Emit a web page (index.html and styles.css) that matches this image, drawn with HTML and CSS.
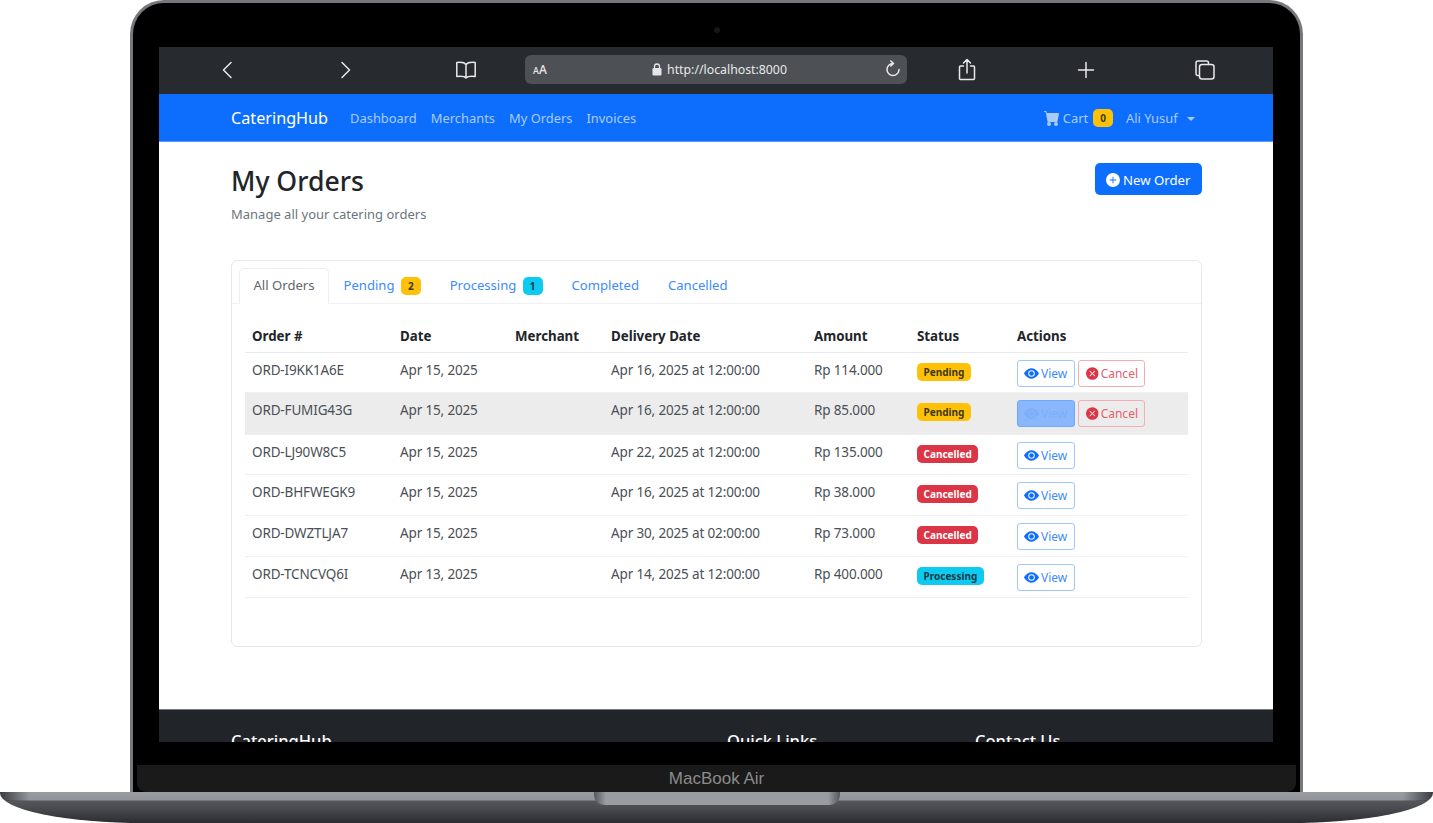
FILE: index.html
```html
<!DOCTYPE html>
<html lang="en">
<head>
  <meta charset="UTF-8" />
  <title>My Orders</title>
  <link rel="stylesheet" href="styles.css">
</head>
<body>
  <svg class="icon-defs" width="0" height="0" aria-hidden="true">
    <symbol id="i-eye" viewBox="0 0 16 16"><path d="M10.5 8a2.5 2.5 0 1 1-5 0 2.5 2.5 0 0 1 5 0"/><path d="M0 8s3-5.5 8-5.5S16 8 16 8s-3 5.5-8 5.5S0 8 0 8m8 3.5a3.5 3.5 0 1 0 0-7 3.5 3.5 0 0 0 0 7"/></symbol>
    <symbol id="i-x" viewBox="0 0 16 16"><path d="M16 8A8 8 0 1 1 0 8a8 8 0 0 1 16 0M5.354 4.646a.5.5 0 1 0-.708.708L7.293 8l-2.647 2.646a.5.5 0 0 0 .708.708L8 8.707l2.646 2.647a.5.5 0 0 0 .708-.708L8.707 8l2.647-2.646a.5.5 0 0 0-.708-.708L8 7.293z"/></symbol>
  </svg>

  <div class="laptop">
    <div class="lid">
      <span class="camera"></span>
      <div class="screen">

        <!-- Safari toolbar -->
        <div class="browser-bar">
          <svg class="tool tool-back" width="12" height="18" viewBox="0 0 12 18"><path d="M10 1.5 2.5 9l7.5 7.5"/></svg>
          <svg class="tool tool-forward" width="12" height="18" viewBox="0 0 12 18"><path d="M2 1.5 9.500 9 2 16.500"/></svg>
          <svg class="tool tool-book" width="22" height="20" viewBox="0 0 22 20"><path d="M11 4.500C9.500 2.500 6 2 1.800 2.500V16.500C6 16 9.500 16.300 11 18 12.500 16.300 16 16 20.200 16.500V2.500C16 2 12.500 2.500 11 4.500ZM11 4.500V18"/></svg>
          <div class="address">
            <span class="aa"><small>A</small>A</span>
            <span class="url">
              <svg width="10" height="13" viewBox="0 0 10 13"><rect x="0.500" y="5" width="9" height="7.500" rx="1.300" fill="#e4e5e6"/><path d="M2.500 5.500V3.500a2.500 2.500 0 0 1 5 0v2" fill="none" stroke="#e4e5e6" stroke-width="1.300"/></svg>
              http://localhost:8000
            </span>
            <svg class="tool" width="16" height="19" viewBox="0 0 16 19"><path d="M8 3.500a6 6 0 1 0 6 6M5.800 1 8.500 3.500 5.800 6"/></svg>
          </div>
          <svg class="tool tool-share" width="18" height="23" viewBox="0 0 18 23"><path d="M5.500 8H2.500a1 1 0 0 0-1 1v11.500a1 1 0 0 0 1 1h13a1 1 0 0 0 1-1V9a1 1 0 0 0-1-1h-3M9 15V1.500M5.500 5 9 1.500 12.500 5"/></svg>
          <svg class="tool tool-plus" width="18" height="18" viewBox="0 0 18 18"><path d="M9 1.500v15M1.500 9h15"/></svg>
          <svg class="tool tool-tabs" width="20" height="20" viewBox="0 0 20 20"><path d="M3.500 15.500H2.800A1.800 1.800 0 0 1 1 13.700V3a2 2 0 0 1 2-2h8.500a2 2 0 0 1 2 2v1"/><rect x="4.500" y="4.500" width="14.500" height="14.500" rx="2.500"/></svg>
        </div>

        <nav class="navbar">
          <a class="brand">CateringHub</a>
          <a class="nav-link">Dashboard</a>
          <a class="nav-link">Merchants</a>
          <a class="nav-link">My Orders</a>
          <a class="nav-link">Invoices</a>
          <div class="nav-right">
            <a class="nav-link cart">
              <svg width="16" height="16" viewBox="0 0 16 16" fill="currentColor"><path d="M0 1.500A.5.5 0 0 1 .5 1H2a.5.5 0 0 1 .485.379L2.890 3H14.500a.5.5 0 0 1 .491.592l-1.500 8A.5.5 0 0 1 13 12H4a.5.5 0 0 1-.491-.408L2.010 3.607 1.610 2H.5a.5.5 0 0 1-.5-.5M5 12a2 2 0 1 0 0 4 2 2 0 0 0 0-4m7 0a2 2 0 1 0 0 4 2 2 0 0 0 0-4"/></svg>
              Cart <span class="badge badge-warning cart-count">0</span>
            </a>
            <a class="nav-link user">Ali Yusuf <span class="caret"></span></a>
          </div>
        </nav>

        <main class="content">
          <div class="page-head">
            <div>
              <h1>My Orders</h1>
              <p class="subtitle">Manage all your catering orders</p>
            </div>
            <a class="btn-new">
              <svg width="14" height="14" viewBox="0 0 16 16" fill="currentColor"><path d="M16 8A8 8 0 1 1 0 8a8 8 0 0 1 16 0M8.500 4.500a.5.5 0 0 0-1 0v3h-3a.5.5 0 0 0 0 1h3v3a.5.5 0 0 0 1 0v-3h3a.5.5 0 0 0 0-1h-3z"/></svg>
              New Order
            </a>
          </div>

          <section class="card">
            <ul class="tabs">
              <li class="tab active">All Orders</li>
              <li class="tab">Pending <span class="badge badge-warning tab-count">2</span></li>
              <li class="tab">Processing <span class="badge badge-info tab-count">1</span></li>
              <li class="tab">Completed</li>
              <li class="tab">Cancelled</li>
            </ul>

            <table class="orders">
              <colgroup>
                <col class="c-order"><col class="c-date"><col class="c-merchant"><col class="c-delivery"><col class="c-amount"><col class="c-status"><col>
              </colgroup>
              <thead>
                <tr><th>Order #</th><th>Date</th><th>Merchant</th><th>Delivery Date</th><th>Amount</th><th>Status</th><th>Actions</th></tr>
              </thead>
              <tbody>
                <tr class="row-short">
                  <td>ORD-I9KK1A6E</td><td>Apr 15, 2025</td><td></td><td>Apr 16, 2025 at 12:00:00</td><td>Rp 114.000</td>
                  <td><span class="badge badge-warning">Pending</span></td>
                  <td><a class="btn btn-view"><svg><use href="#i-eye"/></svg>View</a><a class="btn btn-cancel"><svg><use href="#i-x"/></svg>Cancel</a></td>
                </tr>
                <tr class="hovered">
                  <td>ORD-FUMIG43G</td><td>Apr 15, 2025</td><td></td><td>Apr 16, 2025 at 12:00:00</td><td>Rp 85.000</td>
                  <td><span class="badge badge-warning">Pending</span></td>
                  <td><a class="btn btn-view is-hover"><svg><use href="#i-eye"/></svg>View</a><a class="btn btn-cancel"><svg><use href="#i-x"/></svg>Cancel</a></td>
                </tr>
                <tr class="row-short">
                  <td>ORD-LJ90W8C5</td><td>Apr 15, 2025</td><td></td><td>Apr 22, 2025 at 12:00:00</td><td>Rp 135.000</td>
                  <td><span class="badge badge-danger">Cancelled</span></td>
                  <td><a class="btn btn-view"><svg><use href="#i-eye"/></svg>View</a></td>
                </tr>
                <tr>
                  <td>ORD-BHFWEGK9</td><td>Apr 15, 2025</td><td></td><td>Apr 16, 2025 at 12:00:00</td><td>Rp 38.000</td>
                  <td><span class="badge badge-danger">Cancelled</span></td>
                  <td><a class="btn btn-view"><svg><use href="#i-eye"/></svg>View</a></td>
                </tr>
                <tr>
                  <td>ORD-DWZTLJA7</td><td>Apr 15, 2025</td><td></td><td>Apr 30, 2025 at 02:00:00</td><td>Rp 73.000</td>
                  <td><span class="badge badge-danger">Cancelled</span></td>
                  <td><a class="btn btn-view"><svg><use href="#i-eye"/></svg>View</a></td>
                </tr>
                <tr>
                  <td>ORD-TCNCVQ6I</td><td>Apr 13, 2025</td><td></td><td>Apr 14, 2025 at 12:00:00</td><td>Rp 400.000</td>
                  <td><span class="badge badge-info">Processing</span></td>
                  <td><a class="btn btn-view"><svg><use href="#i-eye"/></svg>View</a></td>
                </tr>
              </tbody>
            </table>
          </section>
        </main>

        <footer class="footer">
          <h5 class="f-brand">CateringHub</h5>
          <h5 class="f-links">Quick Links</h5>
          <h5 class="f-contact">Contact Us</h5>
        </footer>
      </div>
      <div class="bezel"></div>
      <div class="chin">MacBook Air</div>
    </div>
    <div class="base"><span class="notch"></span></div>
  </div>
</body>
</html>
```

FILE: styles.css
```css
* {
  box-sizing: border-box;
}
html, body {
  margin: 0;
  height: 823px;
  overflow: hidden;
  background: #fff;
}
body {
  font-family: "Noto Sans", "Open Sans", sans-serif;
  font-size: 14px;
  color: #212529;
}
.icon-defs {
  display: block;
  height: 0;
}

/* laptop frame */
.laptop {
  display: flex;
  flex-direction: column;
  align-items: center;
  width: 1433px;
}
.lid {
  position: relative;
  width: 1173px;
  height: 792px;
  padding-top: 44px;
  background: #000;
  border: 3px solid #77787c;
  border-bottom: 0;
  border-radius: 34px 34px 0 0;
}
.camera {
  position: absolute;
  top: 24px;
  left: 581px;
  width: 6px;
  height: 6px;
  border-radius: 50%;
  background: #14161a;
}
.screen {
  height: 695px;
  margin: 0 27px 0 26px;
  overflow: hidden;
  background: #fff;
}
.bezel {
  height: 23px;
}
.chin {
  height: 27px;
  margin: 0 4px;
  background: #1a1a1a;
  border-radius: 0 0 9px 9px;
  color: #8b8b8d;
  font-family: "Liberation Sans", sans-serif;
  font-size: 17px;
  line-height: 28px;
  text-align: center;
}
.base {
  position: relative;
  width: 1433px;
  height: 31px;
  background:
    linear-gradient(90deg, #3a3b40 0, rgba(58,59,64,0) 30px, rgba(58,59,64,0) 1403px, #3a3b40 1433px) 0 0 / 100% 9px no-repeat,
    linear-gradient(#9a9ba1 0, #94959b 8px, #55565c 9px, #4b4c52 16px, #2b2c31 31px);
  border-radius: 0 0 145px 145px / 0 0 30px 30px;
}
.notch {
  position: absolute;
  top: 0;
  left: 594px;
  width: 246px;
  height: 13px;
  background: linear-gradient(90deg, #56575c 0, #9b9ca2 12px, #9b9ca2 234px, #56575c 246px);
  border-radius: 0 0 10px 10px;
}

/* safari toolbar */
.browser-bar {
  display: flex;
  align-items: center;
  height: 47px;
  padding-bottom: 2px;
  background: #272b2f;
}
.tool {
  flex: none;
  fill: none;
  stroke: #e8e9ea;
  stroke-width: 1.5;
  stroke-linecap: round;
  stroke-linejoin: round;
}
.tool-back { margin-left: 62px; }
.tool-forward { margin-left: 107px; }
.tool-book { margin-left: 103px; }
.tool-share { margin-left: 51px; }
.tool-plus { margin-left: 101px; }
.tool-tabs { margin-left: 100px; }
.address {
  display: flex;
  align-items: center;
  justify-content: space-between;
  width: 382px;
  height: 29px;
  margin-left: 48px;
  padding: 0 6px 0 8px;
  background: #4d5054;
  border-radius: 6px;
  color: #e8e9ea;
}
.aa {
  width: 21px;
  font-size: 12px;
  font-weight: 500;
}
.aa small {
  font-size: 9px;
}
.url {
  display: flex;
  align-items: center;
  gap: 5px;
  font-size: 12.300px;
}

/* navbar */
.navbar {
  display: flex;
  align-items: center;
  height: 48px;
  padding: 0 72px;
  background: #0d6efd;
  border-bottom: 1px solid #5a9cfd;
  color: #fff;
}
.brand {
  margin-right: 22px;
  font-size: 16.200px;
}
.nav-link {
  margin-right: 14px;
  color: #a9cbfe;
  font-size: 12.900px;
}
.nav-right {
  display: flex;
  align-items: center;
  margin-left: auto;
}
.cart {
  display: flex;
  align-items: center;
  gap: 3px;
  margin-right: 13px;
}
.cart-count {
  margin-left: 2px;
  padding: 4px 7px;
  font-size: 10px;
}
.user {
  margin-right: 6px;
}
.caret {
  display: inline-block;
  margin-left: 6px;
  vertical-align: 2px;
  border-top: 4px solid;
  border-left: 4px solid transparent;
  border-right: 4px solid transparent;
}

/* page */
.content {
  height: 567px;
  padding: 21px 71px 0 72px;
}
.page-head {
  display: flex;
  justify-content: space-between;
  align-items: flex-start;
  height: 97px;
}
h1 {
  margin: 0;
  font-size: 26.600px;
  font-weight: 500;
  line-height: 36px;
}
.subtitle {
  margin: 5px 0 0;
  color: #6c757d;
  font-size: 13px;
  line-height: 20px;
}
.btn-new {
  display: flex;
  align-items: center;
  gap: 3px;
  width: 107px;
  height: 32px;
  padding: 1px 0 0 11px;
  background: #0d6efd;
  border-radius: 5px;
  color: #fff;
  font-size: 13.200px;
}

.card {
  height: 387px;
  padding: 7px 13px 0 7px;
  border: 1px solid #e6e8ea;
  border-radius: 6px;
}
.tabs {
  display: flex;
  height: 36px;
  margin: 0 -13px 0 -7px;
  padding: 0 0 0 7px;
  list-style: none;
  border-bottom: 1px solid #eff0f1;
}
.tab {
  height: 36px;
  padding: 0 14.500px;
  color: #3d8bfd;
  font-size: 13.100px;
  line-height: 35px;
}
.tab.active {
  color: #5f666c;
  background: #fff;
  border: 1px solid #eceef0;
  border-bottom-color: #fff;
  border-radius: 5px 5px 0 0;
  padding: 0 13.500px;
  line-height: 33px;
}
.tab-count {
  margin-left: 3px;
  padding: 4px 7px;
  font-size: 10px;
  color: #212529;
}

.orders {
  width: 943px;
  margin: 16px 0 0 6px;
  border-collapse: collapse;
  table-layout: fixed;
}
.c-order { width: 148px; }
.c-date { width: 115px; }
.c-merchant { width: 96px; }
.c-delivery { width: 203px; }
.c-amount { width: 103px; }
.c-status { width: 100px; }
.orders th {
  height: 32px;
  padding: 0 7px;
  font-size: 13.300px;
  font-weight: 700;
  text-align: left;
  border-bottom: 1px solid #e9eaeb;
}
.orders td {
  height: 41px;
  padding: 7px 7px 0;
  color: #4a5056;
  font-size: 13.500px;
  letter-spacing: -0.15px;
  line-height: 21px;
  vertical-align: top;
  white-space: nowrap;
  border-bottom: 1px solid #eff0f1;
}
.orders .row-short td {
  height: 40px;
}
.orders .hovered td {
  height: 42px;
  background: #ececec;
}

.badge {
  display: inline-block;
  border-radius: 5px;
  font-size: 10px;
  font-weight: 700;
  line-height: 1;
  white-space: nowrap;
}
.orders .badge {
  padding: 4px 6.500px;
  margin-top: 3px;
  vertical-align: top;
  letter-spacing: 0;
}
.badge-warning { background: #ffc107; color: #3b3a1c; }
.badge-danger { background: #dc3545; color: #fff; }
.badge-info { background: #0dcaf0; color: #1c3a44; }

.btn {
  display: inline-flex;
  align-items: center;
  gap: 2px;
  height: 27px;
  padding: 0 6px;
  border: 1px solid;
  border-radius: 3px;
  font-size: 12px;
  letter-spacing: 0;
  vertical-align: top;
}
.btn svg {
  width: 15px;
  height: 15px;
  fill: currentColor;
}
.btn-view {
  width: 58px;
  color: #3d8bfd;
  border-color: #9ec5fe;
  background: #fff;
}
.btn-view svg {
  fill: #0d6efd;
}
.btn-view.is-hover {
  color: #7daefb;
  background: #8ab6fb;
  border-color: #6ea8fe;
}
.btn-view.is-hover svg {
  fill: #7daefb;
}
.btn-cancel {
  width: 67px;
  margin-left: 3px;
  padding-left: 7px;
  color: #e4606d;
  border-color: #f1aeb5;
}
.btn-cancel svg {
  width: 13px;
  height: 13px;
  fill: #dc3545;
}

.footer {
  display: flex;
  height: 34px;
  padding: 19px 0 0 72px;
  background: #212529;
  border-top: 1px solid #77787c;
  color: #fff;
}
.footer h5 {
  margin: 0;
  font-size: 16.500px;
  font-weight: 500;
  line-height: 24px;
}
.f-brand { width: 496px; }
.f-links { width: 248px; }
```
